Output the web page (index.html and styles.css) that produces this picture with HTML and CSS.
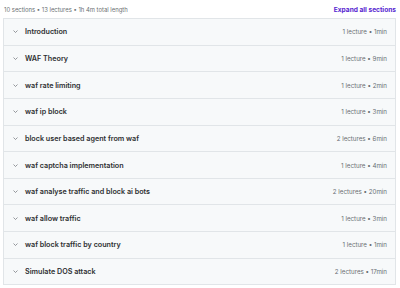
FILE: index.html
```html
<!DOCTYPE html>
<html lang="en">
<head>
    <meta charset="UTF-8">
    <meta name="viewport" content="width=device-width, initial-scale=1.0">
    <title>Course content</title>
    <link rel="stylesheet" href="styles.css">
</head>
<body>
    <div class="curriculum">
        <div class="summary">
            <span>10 sections • 13 lectures • 1h 4m total length</span>
            <button class="expand-all">Expand all sections</button>
        </div>

        <div class="sections">
            <div class="section">
                <svg class="chevron" viewBox="0 0 10 6"><path d="M1 1l4 4 4-4"/></svg>
                <span class="title">Introduction</span>
                <span class="meta">1 lecture • 1min</span>
            </div>
            <div class="section">
                <svg class="chevron" viewBox="0 0 10 6"><path d="M1 1l4 4 4-4"/></svg>
                <span class="title">WAF Theory</span>
                <span class="meta">1 lecture • 9min</span>
            </div>
            <div class="section">
                <svg class="chevron" viewBox="0 0 10 6"><path d="M1 1l4 4 4-4"/></svg>
                <span class="title">waf rate limiting</span>
                <span class="meta">1 lecture • 2min</span>
            </div>
            <div class="section">
                <svg class="chevron" viewBox="0 0 10 6"><path d="M1 1l4 4 4-4"/></svg>
                <span class="title">waf ip block</span>
                <span class="meta">1 lecture • 3min</span>
            </div>
            <div class="section">
                <svg class="chevron" viewBox="0 0 10 6"><path d="M1 1l4 4 4-4"/></svg>
                <span class="title">block user based agent from waf</span>
                <span class="meta">2 lectures • 6min</span>
            </div>
            <div class="section">
                <svg class="chevron" viewBox="0 0 10 6"><path d="M1 1l4 4 4-4"/></svg>
                <span class="title">waf captcha implementation</span>
                <span class="meta">1 lecture • 4min</span>
            </div>
            <div class="section">
                <svg class="chevron" viewBox="0 0 10 6"><path d="M1 1l4 4 4-4"/></svg>
                <span class="title">waf analyse traffic and block ai bots</span>
                <span class="meta">2 lectures • 20min</span>
            </div>
            <div class="section">
                <svg class="chevron" viewBox="0 0 10 6"><path d="M1 1l4 4 4-4"/></svg>
                <span class="title">waf allow traffic</span>
                <span class="meta">1 lecture • 3min</span>
            </div>
            <div class="section">
                <svg class="chevron" viewBox="0 0 10 6"><path d="M1 1l4 4 4-4"/></svg>
                <span class="title">waf block traffic by country</span>
                <span class="meta">1 lecture • 1min</span>
            </div>
            <div class="section">
                <svg class="chevron" viewBox="0 0 10 6"><path d="M1 1l4 4 4-4"/></svg>
                <span class="title">Simulate DOS attack</span>
                <span class="meta">2 lectures • 17min</span>
            </div>
        </div>
    </div>
</body>
</html>
```

FILE: styles.css
```css
body {
    font-family: "Inter", "Liberation Sans", sans-serif;
    background-color: #fff;
    color: #2d2f31;
    margin: 0;
}
.curriculum {
    padding: 2px 4px 0 3px;
}
.summary {
    display: flex;
    justify-content: space-between;
    align-items: center;
    height: 15px;
    font-size: 5.9px;
    color: #6a6f73;
    padding-left: 1px;
}
.expand-all {
    background: none;
    border: none;
    padding: 0;
    font-family: inherit;
    font-size: 6.6px;
    font-weight: 700;
    color: #5624d0;
    cursor: pointer;
}
.sections {
    margin-top: 1px;
    border: 1px solid #e1e5e8;
    border-bottom: none;
}
.section {
    display: flex;
    align-items: center;
    box-sizing: border-box;
    height: 26.65px;
    padding: 0 8px 0 9px;
    background-color: #f7f9fa;
    border-bottom: 1px solid #e1e5e8;
}
.chevron {
    width: 5px;
    height: 3px;
    fill: none;
    stroke: #6a6f73;
    stroke-width: 1.4;
    margin-right: 7px;
}
.title {
    flex: 1;
    font-size: 7.2px;
    font-weight: 600;
}
.meta {
    font-size: 6.2px;
    color: #6a6f73;
}
```
